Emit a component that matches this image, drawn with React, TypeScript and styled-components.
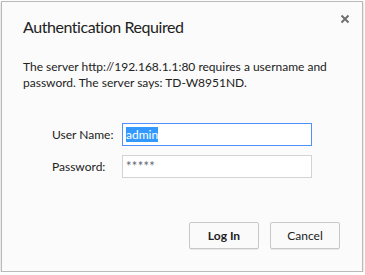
import * as React from 'react';
import styled, { createGlobalStyle } from 'styled-components';

const GlobalStyle = createGlobalStyle`
  html, body {
    margin: 0;
    padding: 0;
    background: #ffffff;
  }
  body {
    font-family: Lato, 'Noto Sans', sans-serif;
    color: #222222;
  }
`;

const StyledDialog = styled.div`
  position: relative;
  box-sizing: border-box;
  margin: 1px 0 0 1px;
  width: 362px;
  height: 271px;
  background: #fbfbfb;
  border: 1px solid #b9b9b9;
  box-shadow: 0 1px 2px rgba(0, 0, 0, 0.25);
  display: flex;
  flex-direction: column;
`;

const StyledTitle = styled.h1`
  margin: 0;
  padding: 15px 20px 0 21px;
  font-size: 16px;
  line-height: 20px;
  font-weight: 400;
  letter-spacing: -0.45px;
  color: #222222;
`;

const StyledClose = styled.button`
  position: absolute;
  top: 8px;
  right: 8px;
  width: 18px;
  height: 18px;
  padding: 0;
  border: none;
  background: transparent;
  display: flex;
  align-items: center;
  justify-content: center;
  cursor: pointer;
`;

const StyledMessage = styled.p`
  margin: 22px 0 0 0;
  padding: 0 20px 0 21px;
  font-size: 12px;
  line-height: 16px;
  color: #222222;
`;

const StyledForm = styled.div`
  display: grid;
  grid-template-columns: 70px 190px;
  row-gap: 9px;
  align-items: center;
  margin-top: 32px;
  padding-left: 50px;
`;

const StyledLabel = styled.label`
  font-size: 12px;
  color: #222222;
`;

const StyledField = styled.div<{ $focused?: boolean }>`
  box-sizing: border-box;
  height: 23px;
  padding: 0 3px;
  display: flex;
  align-items: center;
  background: #ffffff;
  border: 1px solid ${(p) => (p.$focused ? '#4d90fe' : '#d3d3d3')};
  font-size: 12px;
`;

const StyledSelected = styled.span`
  background: #3399ff;
  color: #ffffff;
  line-height: 15px;
`;

const StyledMask = styled.span`
  color: #5f6773;
  font-size: 13px;
  letter-spacing: 0.3px;
  margin-top: -2px;
`;

const StyledFooter = styled.div`
  margin-top: auto;
  padding: 0 22px 22px 0;
  display: flex;
  justify-content: flex-end;
  gap: 11px;
`;

const StyledButton = styled.button<{ $primary?: boolean }>`
  box-sizing: border-box;
  width: 70px;
  height: 27px;
  padding: 0;
  font-family: inherit;
  font-size: 12px;
  font-weight: ${(p) => (p.$primary ? 700 : 400)};
  color: #222222;
  background: #fafafa;
  border: 1px solid #c8c8c8;
  border-radius: 2px;
  box-shadow: 0 1px 0 rgba(0, 0, 0, 0.08);
`;

const App = () => {
  return (
    <>
      <GlobalStyle />
      <StyledDialog>
        <StyledClose aria-label="Close">
          <svg width="10" height="10" viewBox="0 0 10 10">
            <path d="M1.5 1.5 L8.5 8.5 M8.5 1.5 L1.5 8.5" stroke="#6f6f6f" strokeWidth="2" />
          </svg>
        </StyledClose>
        <StyledTitle>Authentication Required</StyledTitle>
        <StyledMessage>
          The server http://192.168.1.1:80 requires a username and password. The server says: TD-W8951ND.
        </StyledMessage>
        <StyledForm>
          <StyledLabel>User Name:</StyledLabel>
          <StyledField $focused>
            <StyledSelected>admin</StyledSelected>
          </StyledField>
          <StyledLabel>Password:</StyledLabel>
          <StyledField>
            <StyledMask>*****</StyledMask>
          </StyledField>
        </StyledForm>
        <StyledFooter>
          <StyledButton $primary>Log In</StyledButton>
          <StyledButton>Cancel</StyledButton>
        </StyledFooter>
      </StyledDialog>
    </>
  );
};

export default App;
